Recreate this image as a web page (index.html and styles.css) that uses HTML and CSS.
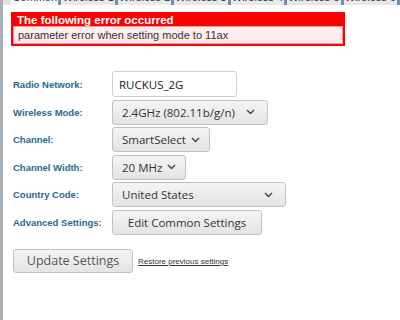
FILE: index.html
```html
<!DOCTYPE html>
<html>
<head>
<meta charset="utf-8">
<title>Wireless Settings</title>
<link rel="stylesheet" href="styles.css">
</head>
<body>
<div class="page">
	<div class="tabs">
		<div class="tab active"><span>Common</span></div>
		<div class="tab"><span>Wireless 1</span></div>
		<div class="tab"><span>Wireless 2</span></div>
		<div class="tab"><span>Wireless 3</span></div>
		<div class="tab"><span>Wireless 4</span></div>
		<div class="tab"><span>Wireless 5</span></div>
		<div class="tab"><span>Wireless 6</span></div>
	</div>
	<div class="content">
		<div class="error">
			<div class="error-title">The following error occurred</div>
			<div class="error-body">parameter error when setting mode to 11ax</div>
		</div>

		<div class="form">
			<label class="label">Radio Network:</label>
			<input class="text" type="text" value="RUCKUS_2G">

			<label class="label">Wireless Mode:</label>
			<button class="select w-mode"><span>2.4GHz (802.11b/g/n)</span><svg class="chev" width="9" height="6" viewBox="0 0 9 6"><path d="M1 1l3.5 3.5L8 1" fill="none" stroke="#444" stroke-width="1.4"/></svg></button>

			<label class="label">Channel:</label>
			<button class="select"><span>SmartSelect</span><svg class="chev" width="9" height="6" viewBox="0 0 9 6"><path d="M1 1l3.5 3.5L8 1" fill="none" stroke="#444" stroke-width="1.4"/></svg></button>

			<label class="label">Channel Width:</label>
			<button class="select"><span>20 MHz</span><svg class="chev" width="9" height="6" viewBox="0 0 9 6"><path d="M1 1l3.5 3.5L8 1" fill="none" stroke="#444" stroke-width="1.4"/></svg></button>

			<label class="label">Country Code:</label>
			<button class="select w-country"><span>United States</span><svg class="chev" width="9" height="6" viewBox="0 0 9 6"><path d="M1 1l3.5 3.5L8 1" fill="none" stroke="#444" stroke-width="1.4"/></svg></button>

			<label class="label">Advanced Settings:</label>
			<button class="btn edit">Edit Common Settings</button>
		</div>

		<div class="actions">
			<button class="btn update">Update Settings</button>
			<a class="restore" href="#">Restore previous settings</a>
		</div>
	</div>
</div>
</body>
</html>
```
FILE: styles.css
```css
html, body {
	margin: 0;
	background: #fff;
	font-family: "Liberation Sans", Arial, sans-serif;
}
.page {
	border-left: 3px solid #a9aeb4;
	min-height: 320px;
	box-sizing: border-box;
}
.tabs {
	display: flex;
	height: 5px;
	background: #e2e2e2;
	padding-left: 8px;
}
.tab {
	width: 54px;
	height: 5px;
	overflow: hidden;
	background: #e8e8e8;
	border-right: 3px solid #6f8fad;
	font-size: 11px;
	color: #333;
	text-align: center;
}
.tab.active {
	width: 48px;
	background: #fafafa;
}
.tab span {
	display: block;
	margin-top: -9px;
	line-height: 12px;
}
.content {
	padding: 7px 0 0 8px;
}
.error {
	width: 334px;
	box-sizing: border-box;
	border: 2px solid #ff0000;
	background: #ff0000;
}
.error-title {
	color: #fff;
	font-weight: bold;
	font-size: 11.5px;
	line-height: 12px;
	padding: 0 0 0 4px;
}
.error-body {
	background: #ffeded;
	border: 1px solid #ff9a9a;
	font-size: 11px;
	color: #333;
	line-height: 16px;
	padding: 0 4px;
}
.form {
	display: grid;
	grid-template-columns: 99px auto;
	row-gap: 2.6px;
	align-items: center;
	justify-items: start;
	margin: 25px 0 0 2px;
}
.label {
	font-size: 9.5px;
	font-weight: bold;
	color: #27698c;
}
.text {
	width: 125px;
	height: 26px;
	box-sizing: border-box;
	border: 1px solid #cfcfcf;
	border-radius: 3px;
	padding: 0 6px;
	font-family: "Open Sans", sans-serif;
	font-size: 11.5px;
	color: #222;
}
.select, .btn {
	height: 25px;
	box-sizing: border-box;
	border: 1px solid #c2c2c2;
	border-radius: 3px;
	background: linear-gradient(#f4f4f4, #e4e4e4);
	font-family: "Open Sans", sans-serif;
	font-size: 11.5px;
	color: #333;
	padding: 0 9px;
}
.select {
	display: flex;
	align-items: center;
	justify-content: space-between;
	gap: 5px;
}
.w-mode {
	width: 156px;
	padding-right: 12px;
}
.w-country {
	width: 174px;
	padding-right: 12px;
}
.edit {
	width: 150px;
}
.actions {
	display: flex;
	align-items: center;
	gap: 5px;
	margin: 14px 0 0 2px;
}
.update {
	width: 120px;
	height: 24px;
	font-size: 12.5px;
	color: #555;
}
.restore {
	font-size: 8px;
	color: #333;
	margin-top: 1px;
}
```
